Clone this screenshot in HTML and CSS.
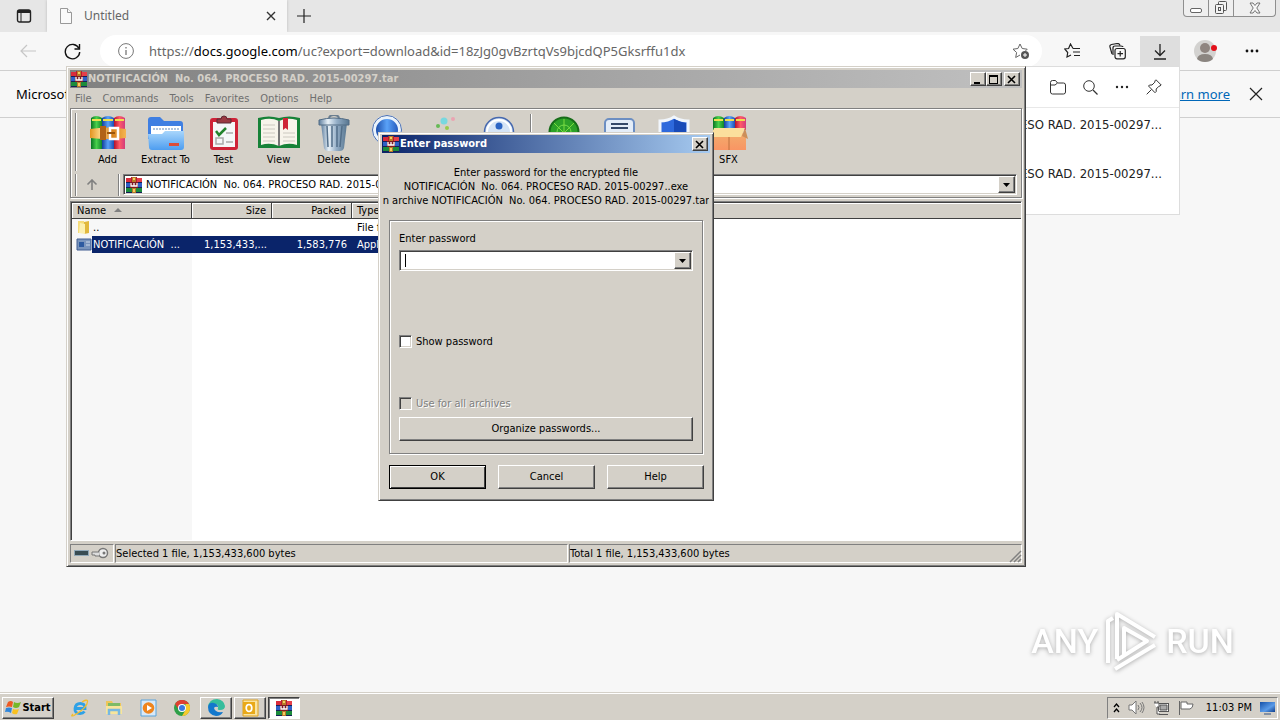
FILE: index.html
```html
<!DOCTYPE html>
<html lang="en">
<head>
<meta charset="utf-8">
<title>Untitled</title>
<link rel="stylesheet" href="styles.css">
</head>
<body>
<svg class="defs" aria-hidden="true">
  <defs>
    <linearGradient id="gr" x2="1"><stop offset="0" stop-color="#087522"/><stop offset=".5" stop-color="#49d04c"/><stop offset="1" stop-color="#11852a"/></linearGradient>
    <linearGradient id="bl" x2="1"><stop offset="0" stop-color="#123f9c"/><stop offset=".5" stop-color="#5aa2f8"/><stop offset="1" stop-color="#1c4fb4"/></linearGradient>
    <linearGradient id="rd" x2="1"><stop offset="0" stop-color="#b3122c"/><stop offset=".5" stop-color="#ff5a68"/><stop offset="1" stop-color="#d23c7c"/></linearGradient>
    <linearGradient id="go" x2="1"><stop offset="0" stop-color="#e39421"/><stop offset=".3" stop-color="#ffd98a"/><stop offset=".6" stop-color="#d77f18"/><stop offset="1" stop-color="#f5b552"/></linearGradient>
    <linearGradient id="fo" x2="0" y2="1"><stop offset="0" stop-color="#a9d6fb"/><stop offset="1" stop-color="#4d9df0"/></linearGradient>
    <linearGradient id="me" x2="1"><stop offset="0" stop-color="#5f7f9f"/><stop offset=".3" stop-color="#e8f1f8"/><stop offset=".6" stop-color="#93adc6"/><stop offset="1" stop-color="#57758f"/></linearGradient>
    <linearGradient id="bx" x2="0" y2="1"><stop offset="0" stop-color="#f2ac6c"/><stop offset="1" stop-color="#f99564"/></linearGradient>
    <linearGradient id="sc" x2="1" y2="1"><stop offset="0" stop-color="#1450a8"/><stop offset=".6" stop-color="#5a9be8"/><stop offset="1" stop-color="#0d3d8c"/></linearGradient>
    <symbol id="rar" viewBox="0 0 16 16">
      <path d="M0 1h5v4H0z" fill="#d92c3c"/><path d="M5 0h6v5H5z" fill="#b51c30"/><path d="M11 1h5v4h-5z" fill="#e5404a"/>
      <path d="M0 6h16v4H0z" fill="#2f5fc6"/><path d="M0 11h16v4H0z" fill="#1c8c3c"/>
      <path d="M0 5h16v1H0zM0 10h16v1H0zM0 15h16v1H0z" fill="#162058"/>
      <path d="M6 0h4v16H6z" fill="#b77a28"/><path d="M4 5h8v6H4z" fill="#7e1a22"/>
      <path d="M5 6v3h6V6M8 6v3" stroke="#fff" stroke-width="1.3" fill="none"/>
      <path d="M7 12h2v3H7zM7 1h2v2H7z" fill="#f4ce60"/>
    </symbol>
  </defs>
</svg>

<div class="desktop">
  <main class="browser">
    <div class="tabs">
      <button class="ghost tab-menu" aria-label="Tab actions"><svg width="16" height="16" viewBox="0 0 16 16" fill="none" stroke="#222"><rect x="1.5" y="2" width="13" height="12" rx="2" stroke-width="1.4"/><path d="M2 3.5h12" stroke-width="3"/><path d="M5 5v9"/></svg></button>
      <div class="tab">
        <svg width="12" height="16" viewBox="0 0 12 16" fill="#fafafa" stroke="#999"><path d="M.5 .5h7l4 4v11H.5z"/><path d="M7.500 .5v4h4"/></svg>
        <span class="tab-name">Untitled</span>
        <button class="ghost" aria-label="Close tab"><svg width="10" height="10" viewBox="0 0 10 10" stroke="#333" stroke-width="1.4"><path d="M1 1l8 8M9 1l-8 8"/></svg></button>
      </div>
      <button class="ghost new-tab" aria-label="New tab"><svg width="16" height="16" viewBox="0 0 16 16" stroke="#222" stroke-width="1.2"><path d="M8 1v14M1 8h14"/></svg></button>
      <div class="captions">
        <button aria-label="Minimize"><svg width="14" height="12" viewBox="0 0 14 12"><rect x="1.500" y="6.500" width="11" height="4" rx="1.500" fill="#fff" stroke="#666"/></svg></button>
        <button aria-label="Restore"><svg width="14" height="14" viewBox="0 0 14 14" fill="#f3f3f3" stroke="#555"><rect x="4.500" y=".5" width="8" height="9" rx="1"/><rect x="1.500" y="3.500" width="8" height="9" rx="1"/><rect x="4.500" y="6.500" width="2" height="3"/></svg></button>
        <button class="wide" aria-label="Close"><svg width="12" height="12" viewBox="0 0 12 12" fill="#f8f8f8" stroke="#666" stroke-width=".9"><path d="M1 1h3l2 2.500L8 1h3L7.800 6 11 11H8L6 8.500 4 11H1l3.200-5z"/></svg></button>
      </div>
    </div>
    <div class="nav">
      <button class="ghost back" aria-label="Back"><svg width="16" height="14" viewBox="0 0 16 14" fill="none" stroke="#c6c6c6" stroke-width="1.2"><path d="M16 7H1M7 1L1 7l6 6"/></svg></button>
      <button class="ghost reload" aria-label="Refresh"><svg width="17" height="17" viewBox="0 0 17 17" fill="none" stroke="#111" stroke-width="1.4"><path d="M15 5.500A7.200 7.200 0 1 0 15.700 9"/><path d="M15.500 1v5h-5"/></svg></button>
      <div class="address">
        <svg width="16" height="16" viewBox="0 0 16 16" fill="none" stroke="#777"><circle cx="8" cy="8" r="7.400"/><path d="M8 7v5M8 4v1.500" stroke-width="1.300"/></svg>
        <span class="url">https://<b>docs.google.com</b>/uc?export=download&amp;id=18zJg0gvBzrtqVs9bjcdQP5Gksrffu1dx</span>
        <button class="ghost" aria-label="Add to favorites"><svg width="18" height="17" viewBox="0 0 18 17" fill="none" stroke="#666"><path d="M8 12l-4.300 2.500.9-5L1 6.200l4.900-.7L8 1l2.200 4.500 5 .7-2 2"/><circle cx="13" cy="12" r="4" fill="#555" stroke="none"/><path d="M13 10v4M11 12h4" stroke="#fff"/></svg></button>
      </div>
      <div class="nav-tools">
        <button class="ghost" aria-label="Favorites"><svg width="17" height="16" viewBox="0 0 17 16" fill="none" stroke="#222" stroke-width="1.200"><path d="M9 5.500L6.500 1 4.600 5.500.7 6l3 3.500L3 14l4-2M9 5.500h7M9 9h7M10 12.500h6"/></svg></button>
        <button class="ghost collect" aria-label="Collections"><svg width="17" height="17" viewBox="0 0 17 17" fill="none" stroke="#222" stroke-width="1.200"><path d="M3 11L1 4Q.5 2 2.500 1.500l6-1Q10.500.5 11 2.500"/><path d="M4 12V5q0-2 2-2h6q2 0 2 1"/><rect x="6" y="5.500" width="10.300" height="10.300" rx="2" fill="#f7f7f7"/><path d="M11.200 8v5.500M8.500 10.700H14"/></svg></button>
        <button class="ghost active" aria-label="Downloads"><svg width="14" height="17" viewBox="0 0 14 17" fill="none" stroke="#222" stroke-width="1.300"><path d="M7 1v11M2 7.500L7 12.500l5-5M1 16h12"/></svg></button>
        <button class="ghost profile" aria-label="Profile"><svg width="24" height="22" viewBox="0 0 24 22"><circle cx="11" cy="11" r="11" fill="#d3d2d0"/><circle cx="11" cy="8" r="5" fill="#8f8580"/><path d="M3 19q1-5 8-5t8 5q-3 3-8 3t-8-3" fill="#8b8580"/><circle cx="20" cy="8" r="3" fill="#e3101b"/></svg></button>
        <button class="ghost more" aria-label="Settings"><svg width="14" height="4" viewBox="0 0 14 4" fill="#111"><circle cx="2" cy="2" r="1.400"/><circle cx="7" cy="2" r="1.400"/><circle cx="12" cy="2" r="1.400"/></svg></button>
      </div>
    </div>
    <div class="notice">
      <span>Microsoft</span>
      <a href="#">Learn more</a>
      <button class="ghost" aria-label="Dismiss"><svg width="14" height="14" viewBox="0 0 14 14" stroke="#222" stroke-width="1.200"><path d="M1 1l12 12M13 1L1 13"/></svg></button>
    </div>
  </main>

  <section class="downloads" aria-label="Downloads">
    <div class="dl-head">
      <button class="ghost" aria-label="Open folder"><svg width="16" height="15" viewBox="0 0 16 15" fill="none" stroke="#333"><path d="M.5 12V2.500q0-2 2-2h3l2 2.500h6q2 0 2 2v7q0 2-2 2h-11q-2 0-2-2M.5 5h4.500l2.500-2"/></svg></button>
      <button class="ghost" aria-label="Search"><svg width="15" height="15" viewBox="0 0 15 15" fill="none" stroke="#333"><circle cx="6" cy="6" r="5.300"/><path d="M10 10l4.500 4.500" stroke-width="1.300"/></svg></button>
      <button class="ghost" aria-label="More"><svg width="14" height="4" viewBox="0 0 14 4" fill="#222"><circle cx="2" cy="2" r="1.200"/><circle cx="7" cy="2" r="1.200"/><circle cx="12" cy="2" r="1.200"/></svg></button>
      <button class="ghost" aria-label="Pin"><svg width="16" height="16" viewBox="0 0 16 16" fill="none" stroke="#333"><path d="M10 .8l5.200 5.200-1.200 1-1 .2-2.800 2.800v2.500L9 13.700 2.500 7l1-1H6l2.800-2.800.2-1.400zM5.500 10.500L.7 15.300"/></svg></button>
    </div>
    <p class="dl-item">PROCESO RAD. 2015-00297...</p>
    <p class="dl-item">PROCESO RAD. 2015-00297...</p>
  </section>

  <div class="watermark" aria-label="ANY RUN">
    <span>ANY</span>
    <svg width="58" height="64" viewBox="0 0 58 64" fill="none" stroke="#fff" stroke-width="4" stroke-linejoin="round"><path d="M5 54V12l5-3M14 50V5l38 23M12 60l40-24M21 47V19l23 13-30 19"/></svg>
    <span>RUN</span>
  </div>

  <section class="window archive" aria-label="Archive">
    <header class="title inactive">
      <svg width="17" height="16"><use href="#rar" width="16" height="16"/></svg>
      <h1>NOTIFICACIÓN  No. 064. PROCESO RAD. 2015-00297.tar</h1>
      <button class="cap" aria-label="Minimize"><svg width="10" height="9" viewBox="0 0 10 9"><path d="M1 7h6v2H1z"/></svg></button>
      <button class="cap" aria-label="Maximize"><svg width="10" height="9" viewBox="0 0 10 9"><path d="M0 0h9v9H0zM1 2v6h7V2z" fill-rule="evenodd"/></svg></button>
      <button class="cap apart" aria-label="Close"><svg width="10" height="9" viewBox="0 0 10 9" stroke="#000" stroke-width="1.600"><path d="M1 1l7 7M8 1L1 8"/></svg></button>
    </header>
    <nav class="menu">
      <button>File</button><button>Commands</button><button>Tools</button><button>Favorites</button><button>Options</button><button>Help</button>
    </nav>
    <div class="bars">
      <div class="tools">
        <button class="tool"><svg width="36" height="36" viewBox="0 0 36 36"><path d="M1 3q5-4 11 0v31H1z" fill="url(#gr)"/><path d="M12 3q6-4 12 0v31H12z" fill="url(#bl)"/><path d="M24 3q5-4 11 0v31H24z" fill="url(#rd)"/><path d="M2 5h9M13 5h10M25 5h9" stroke="#efe04e" stroke-width="2"/><path d="M0 14q18-3 36 0v9q-18 2-36 0z" fill="url(#go)"/><path d="M10 11h6v14h-6z" fill="#b16317"/><path d="M20 13h8v11h-8z" fill="none" stroke="#fff" stroke-width="2.500"/><path d="M17 18h8" stroke="#9a560e" stroke-width="2"/></svg>Add</button>
        <button class="tool big"><svg width="38" height="36" viewBox="0 0 38 36"><path d="M1 5q0-3 3-3h9l4 4h16q3 0 3 3v15H1z" fill="#3f7fe2"/><path d="M4 11h30v12H4z" fill="#fff"/><path d="M6 14h27" stroke="#aec4df" stroke-dasharray="2 1" stroke-width="2"/><path d="M1 19h14l3-3h19v16q0 3-3 3H5q-3 0-3-3z" fill="url(#fo)"/><path d="M22 28h10v3H22z" fill="#dc4c38"/></svg>Extract To</button>
        <button class="tool"><svg width="32" height="36" viewBox="0 0 32 36"><rect x="2" y="3" width="28" height="32" rx="3" fill="#cf2338"/><path d="M5 7h22v25H5z" fill="#f5f7f8"/><path d="M9 8V4h4q0-3 3-3t3 3h4v4z" fill="#9a3941" stroke="#5d2b34"/><path d="M8 16l3 4 7-7" fill="none" stroke="#23832d" stroke-width="2.500"/><path d="M18 18h7M8 23h7v6H8zM18 27h7" stroke="#aaa" stroke-width="1.500" fill="none"/></svg>Test</button>
        <button class="tool"><svg width="42" height="36" viewBox="0 0 42 36"><path d="M0 3q11-3 21 0 10-3 21 0v30H0z" fill="#168238"/><path d="M3 5q10-3 18 1v25q-9-4-18-1zM39 5q-10-3-18 1v25q9-4 18-1z" fill="#f7f4eb"/><path d="M21 6v25" stroke="#777" stroke-width="2"/><path d="M5 10h12M5 14h12M5 18h12M5 22h12M5 26h12M25 18h12M25 22h12M25 26h12" stroke="#ccc9c0"/><path d="M25 3h5v12l-2.500-2-2.500 2z" fill="#ce2436"/></svg>View</button>
        <button class="tool"><svg width="32" height="36" viewBox="0 0 32 36"><path d="M11 4q0-4 5-4t5 4" fill="none" stroke="#6b7e90" stroke-width="2"/><path d="M3 8h26l-3 25q-1 3-4 3H10q-3 0-4-3z" fill="url(#me)"/><path d="M9 11l1 21M14 11v21M19 11v21M24 11l-2 21" stroke="#526e89" stroke-width="1.500"/><path d="M1 5q15-4 30 0v5H1z" fill="url(#me)" stroke="#536c85"/></svg>Delete</button>
        <button class="tool" aria-label="Find"><svg width="34" height="36" viewBox="0 0 34 36"><circle cx="15" cy="15" r="13" fill="url(#bl)" stroke="#eaf3fc" stroke-width="4"/><circle cx="15" cy="15" r="14.500" fill="none" stroke="#496cad"/></svg></button>
        <button class="tool" aria-label="Wizard"><svg width="36" height="36" viewBox="0 0 36 36"><circle cx="18" cy="6" r="3.500" fill="#78d8df"/><circle cx="27" cy="4" r="2" fill="#eaa4b2"/><circle cx="12" cy="11" r="2" fill="#65ba55"/><circle cx="21" cy="13" r="2" fill="#9acb49"/></svg></button>
        <button class="tool" aria-label="Info"><svg width="34" height="36" viewBox="0 0 34 36"><circle cx="17" cy="17" r="14.500" fill="#d5e4f6" stroke="#4668ae" stroke-width="1.500"/><circle cx="17" cy="17" r="12" fill="none" stroke="#fff" stroke-width="2"/><circle cx="17" cy="11" r="3.500" fill="#2c65c4"/></svg></button>
        <span class="rule"></span>
        <button class="tool" aria-label="Virus scan"><svg width="34" height="36" viewBox="0 0 34 36"><circle cx="17" cy="17" r="14.500" fill="#2ca128" stroke="#176d19" stroke-width="2"/><path d="M17 4v26M7 8l20 20M27 8L7 28" stroke="#7cdc3e"/><circle cx="17" cy="17" r="7" fill="none" stroke="#77dd48"/></svg></button>
        <button class="tool" aria-label="Comment"><svg width="34" height="36" viewBox="0 0 34 36"><rect x="3" y="4" width="29" height="25" rx="4" fill="#e4edf8" stroke="#6c8ec2" stroke-width="2"/><path d="M9 9h17M9 13h17" stroke="#354969" stroke-width="2"/></svg></button>
        <button class="tool" aria-label="Protect"><svg width="34" height="36" viewBox="0 0 34 36"><path d="M3 6q8 0 14-4 6 4 14 4v14q-3 9-14 14Q6 29 3 20z" fill="#2e69dc" stroke="#f1f6fc" stroke-width="3"/><path d="M17 4q6 3 12 4v10H17z" fill="#194bb8"/></svg></button>
        <button class="tool"><svg width="38" height="36" viewBox="0 0 38 36"><path d="M3 3q5-4 11 0v12H3z" fill="url(#gr)"/><path d="M14 3q5-4 11 0v12H14z" fill="url(#bl)"/><path d="M25 3q5-4 11 0v12H25z" fill="url(#rd)"/><path d="M4 5h9M15 5h9M26 5h9" stroke="#efe04e" stroke-width="2"/><path d="M3 18h33v17H3z" fill="url(#bx)"/><path d="M4 13h31l-4 9H1z" fill="#fbdf9d"/><path d="M35 13l3 11-6-3z" fill="#cc8f5a"/><path d="M19 22v13" stroke="#bd713e"/></svg>SFX</button>
      </div>
      <div class="path">
        <button class="up" aria-label="Up"><svg width="12" height="11" viewBox="0 0 12 11" fill="none" stroke="#808080" stroke-width="1.600"><path d="M6 11V1M1.500 5.500L6 1l4.500 4.500"/></svg></button>
        <div class="combo">
          <svg width="16" height="16"><use href="#rar"/></svg>
          <input aria-label="Path" value="NOTIFICACIÓN  No. 064. PROCESO RAD. 2015-00297.tar">
          <button class="drop" aria-label="Open list"><svg width="7" height="4"><path d="M0 0h7L3.500 4z"/></svg></button>
        </div>
      </div>
    </div>
    <div class="list">
      <table>
        <colgroup><col class="c-name"><col class="c-num"><col class="c-num"><col class="c-type"><col></colgroup>
        <thead><tr><th>Name <svg class="sort" width="8" height="4"><path d="M0 4l4-4 4 4z" fill="#808080"/></svg></th><th class="num">Size</th><th class="num">Packed</th><th>Type</th><th></th></tr></thead>
        <tbody>
          <tr><td class="file"><svg width="16" height="15" viewBox="0 0 16 15"><path d="M2 1h6v12H2z" fill="#f5dc7a"/><path d="M8 2l5-1v12l-5 1z" fill="#e1b83d"/><path d="M4 3l5 1v10l-6-1z" fill="#fcf0b0"/></svg><span>..</span></td><td></td><td></td><td>File folder</td><td></td></tr>
          <tr class="selected"><td class="file"><svg width="16" height="14" viewBox="0 0 16 14"><path d="M1 1h14v11H1z" fill="#7995bd" stroke="#405d91"/><path d="M3 4h5v5H3z" fill="#2c5aa0"/><path d="M10 4h4M10 7h4" stroke="#cbd8eb"/></svg><span>NOTIFICACIÓN  ...</span></td><td class="num">1,153,433,...</td><td class="num">1,583,776</td><td>Application</td><td></td></tr>
        </tbody>
      </table>
    </div>
    <footer class="status">
      <div class="marks"><svg width="36" height="12" viewBox="0 0 36 12"><rect x=".5" y="3.500" width="14" height="5" fill="#394c53" stroke="#91a8b8"/><circle cx="29" cy="6" r="4.500" fill="#eee" stroke="#777" stroke-width="1.500"/><circle cx="30" cy="6" r="1.500" fill="#777"/><path d="M25 5h-7v3h3v1h4" fill="#ddd" stroke="#777"/></svg></div>
      <div>Selected 1 file, 1,153,433,600 bytes</div>
      <div>Total 1 file, 1,153,433,600 bytes</div>
      <svg class="grip" width="13" height="13" viewBox="0 0 13 13" stroke="#808080" stroke-width="1.500"><path d="M12 1L1 12M12 5l-7 7M12 9l-3 3"/></svg>
    </footer>
  </section>

  <form class="window dialog" aria-label="Enter password" onsubmit="return false">
    <header class="title">
      <svg width="17" height="16"><use href="#rar" width="16" height="16"/></svg>
      <h2>Enter password</h2>
      <button type="button" class="cap apart" aria-label="Close"><svg width="10" height="9" viewBox="0 0 10 9" stroke="#000" stroke-width="1.600"><path d="M1 1l7 7M8 1L1 8"/></svg></button>
    </header>
    <div class="message"><p>Enter password for the encrypted file</p><p>NOTIFICACIÓN  No. 064. PROCESO RAD. 2015-00297..exe</p><p>n archive NOTIFICACIÓN  No. 064. PROCESO RAD. 2015-00297.tar</p></div>
    <div class="group">
      <label for="pw">Enter password</label>
      <div class="combo pw">
        <input id="pw" type="text"><span class="caret"></span>
        <button type="button" class="drop" aria-label="Open list"><svg width="7" height="4"><path d="M0 0h7L3.500 4z"/></svg></button>
      </div>
      <label class="check"><input type="checkbox">Show password</label>
      <label class="check off"><input type="checkbox" disabled>Use for all archives</label>
      <button type="button" class="push">Organize passwords...</button>
    </div>
    <div class="actions">
      <button class="push main">OK</button><button type="button" class="push">Cancel</button><button type="button" class="push">Help</button>
    </div>
  </form>

  <footer class="taskbar">
    <button class="task start"><svg width="17" height="16" viewBox="0 0 17 16"><path d="M3 2q3-2 5 0L7 7Q4 6 1 7z" fill="#ee5a24"/><path d="M9 2q3 2 7 0l-2 5q-3 2-6 0z" fill="#76b82a"/><path d="M1 8q3-1 6 0l-1 5q-3-2-6-1z" fill="#2f86dc"/><path d="M8 9q3 1 6 0l-2 5q-3 1-5-1z" fill="#f9c120"/></svg>Start</button>
    <button class="task flat ie" aria-label="Internet Explorer"><svg width="18" height="18" viewBox="0 0 18 18" fill="none"><path d="M4 9.500h10Q14 4.500 9.300 4.500T4 9.500t5 5q3 0 4.500-2" stroke="#2ea1e6" stroke-width="2.800"/><path d="M2 15Q-1 18 3 16.500 17 8 16.500 2 16 0 11 3" stroke="#f2bd2c" stroke-width="1.300"/></svg></button>
    <button class="task flat" aria-label="Explorer"><svg width="18" height="18" viewBox="0 0 18 18"><path d="M1 2h6l1 2h8v11H1z" fill="#eec659"/><path d="M3 4h12v4H3z" fill="#7dbb67"/><path d="M1 7h16v8H1z" fill="#f8e59b"/><path d="M4 16v-5h10v5" fill="none" stroke="#77b8e2" stroke-width="2.500"/></svg></button>
    <button class="task flat" aria-label="Media player"><svg width="17" height="18" viewBox="0 0 17 18"><path d="M1 1h15v16H1z" fill="#d8e9f8" stroke="#58a3dc"/><circle cx="8.500" cy="9" r="5.800" fill="#ef851e"/><path d="M7 6l5 3-5 3z" fill="#fff"/></svg></button>
    <button class="task flat" aria-label="Chrome"><svg width="16" height="16" viewBox="0 0 16 16"><circle cx="8" cy="8" r="8" fill="#2e9f48"/><path d="M1 4A8 8 0 0 1 15 4H8l-3 6z" fill="#df4031"/><path d="M15 4A8 8 0 0 1 8 16l3.500-6V4z" fill="#f7c92c"/><circle cx="8" cy="8" r="4" fill="#fff"/><circle cx="8" cy="8" r="3" fill="#3b79e1"/></svg></button>
    <button class="task" aria-label="Edge"><svg width="17" height="17" viewBox="0 0 17 17"><path d="M0 8Q1 0 9 0q7 1 8 7 0 4-5 4-3 0-2-2 1-4-3-4Q3 5 0 8" fill="#35bd9c"/><path d="M0 8Q1 3 6 4q4 1 4 4-3-1-4 1 1 5 9 4-2 4-7 4Q0 16 0 8" fill="#1378cc"/></svg></button>
    <button class="task" aria-label="Outlook"><svg width="17" height="18" viewBox="0 0 17 18"><path d="M1 1h15v16H1z" fill="#fae4a0" stroke="#e0a21c"/><path d="M1 3h12v12H1z" fill="#e9a918"/><ellipse cx="7" cy="9" rx="2.800" ry="3.500" fill="none" stroke="#fff" stroke-width="1.700"/></svg></button>
    <button class="task pressed" aria-label="WinRAR"><svg width="16" height="16"><use href="#rar"/></svg></button>
    <div class="tray">
      <svg width="7" height="12" viewBox="0 0 7 12" fill="none" stroke="#000" stroke-width="1.300"><path d="M1 5l2.500-3L6 5M1 10l2.500-3L6 10"/></svg>
      <svg width="17" height="15" viewBox="0 0 17 15" fill="#fff" stroke="#777"><path d="M1 5h3l4-4v13l-4-4H1z"/><path d="M10 5q2 2.500 0 5M12 3q4 4.500 0 9M14 2q4 5.500 0 11" fill="none"/></svg>
      <svg width="17" height="16" viewBox="0 0 17 16" fill="#fff" stroke="#555"><rect x="5.500" y="3.500" width="10" height="8"/><path d="M7 5h7v5H7z" fill="#aaa"/><path d="M6 14.500h9M1 3h5v4H4v7h3M2 1v2M5 1v2"/></svg>
      <svg width="16" height="15" viewBox="0 0 16 15" fill="#fff" stroke="#666"><path d="M1.500 1v14M3 2h6v2h6q0 4-3 5H3z"/></svg>
      <time>11:03 PM</time>
      <svg width="15" height="14" viewBox="0 0 15 14"><path d="M0 1h15v10H0z" fill="url(#sc)"/><path d="M4 12h7v2H4z" fill="#8290a4"/></svg>
    </div>
  </footer>
</div>
</body>
</html>
```
FILE: styles.css
```css
* { box-sizing: border-box; }
body { margin: 0; }
h1, h2, p { margin: 0; font: inherit; }
button, input { font: inherit; color: inherit; padding: 0; border: 0; background: none; border-radius: 0; outline: 0; }
svg { display: block; flex: none; }
.defs { position: absolute; width: 0; height: 0; }

.desktop {
  position: relative;
  display: flex;
  flex-direction: column;
  min-height: 100vh;
  overflow: hidden;
  background: #f7f7f7;
  color: #000;
  font: 11px/14px "DejaVu Sans Condensed", "DejaVu Sans", sans-serif;
}

/* Browser */
.browser { flex: 1; font-family: "Noto Sans", "Open Sans", sans-serif; }
.ghost { display: grid; place-items: center; }
.tabs { display: flex; align-items: stretch; height: 32px; background: #e6e6e6; }
.tab-menu { width: 47px; }
.tab {
  flex: 0 1 240px;
  display: flex;
  align-items: center;
  gap: 12px;
  padding: 0 11px 0 13px;
  background: #f7f7f7;
  box-shadow: 0 0 3px #bbb;
  clip-path: inset(0 -3px);
  font-size: 12px;
  color: #666;
}
.tab-name { flex: 1; }
.new-tab { width: 34px; }
.captions { display: flex; height: 17px; margin: 0 4px 0 auto; border: 1px solid #8f8f8f; border-top: 0; border-radius: 0 0 4px 4px; background: #efefef; }
.captions button { display: grid; place-items: center; width: 25px; border-right: 1px solid #8f8f8f; }
.captions .wide { width: 41px; border: 0; }
.nav { display: flex; align-items: center; height: 39px; border-bottom: 1px solid #cfcfcf; background: #f7f7f7; }
.back { width: 56px; }
.reload { width: 32px; }
.address { flex: 1; display: flex; align-items: center; gap: 15px; height: 32px; margin-left: 12px; padding: 0 12px 0 18px; border-radius: 16px; background: #fff; }
.url { flex: 1; font-size: 13px; line-height: 20px; color: #666; white-space: nowrap; }
.url b { font-weight: 400; color: #000; }
.nav-tools { display: flex; align-self: stretch; align-items: center; padding: 4px 8px 0; }
.nav-tools .ghost { width: 44px; height: 34px; padding-bottom: 4px; }
.nav-tools .collect { width: 46px; }
.nav-tools .active { width: 40px; background: #dedede; }
.nav-tools .profile { width: 52px; }
.nav-tools .more { width: 40px; }
.notice { display: flex; align-items: center; height: 47px; padding: 0 17px 0 16px; border-bottom: 1px solid #cfcfcf; font-size: 13px; line-height: 18px; }
.notice a { margin: 0 19px 0 auto; color: #0067b8; }

.downloads { position: absolute; top: 66px; right: 100px; width: 360px; height: 149px; border: 1px solid #ddd; background: #fff; }
.dl-head { display: flex; justify-content: flex-end; align-items: center; gap: 17px; height: 41px; padding-right: 17px; border-bottom: 1px solid #e8e8e8; }
.dl-item { padding: 8px 17px 23px 0; font-size: 13px; line-height: 18px; text-align: right; color: #222; }

.watermark {
  position: absolute;
  right: 46px;
  bottom: 47px;
  display: flex;
  align-items: center;
  gap: 5px;
  font: 500 34px/44px Roboto, sans-serif;
  color: #fff;
  filter: drop-shadow(0 1px 2px #aaa);
}

/* Windows */
.window {
  position: absolute;
  border: 1px solid;
  border-color: #d4d0c8 #404040 #404040 #d4d0c8;
  background: #d4d0c8;
  box-shadow: inset 1px 1px #fff, inset -1px -1px #808080;
}
.archive { top: 66px; left: 66px; width: 75%; height: 501px; display: flex; flex-direction: column; padding: 3px; }
.dialog { top: 132px; left: 378px; width: 336px; padding: 2px 3px 11px; }
.title {
  display: flex;
  align-items: center;
  height: 18px;
  padding: 0 2px 0 1px;
  background: linear-gradient(90deg, #0a246a, #a6caf0);
  color: #fff;
  font-weight: 700;
  white-space: pre;
}
.title h1, .title h2 { flex: 1; }
.inactive { background: linear-gradient(90deg, #808080, #c0c0c0); color: #d4d0c8; }
.cap, .drop, .push, .task {
  display: flex;
  align-items: center;
  justify-content: center;
  background: #d4d0c8;
  border: 1px solid;
  border-color: #fff #404040 #404040 #fff;
  box-shadow: inset -1px -1px #808080;
}
.cap { width: 16px; height: 14px; }
.cap.apart { margin-left: 2px; }
.menu { display: flex; gap: 11px; padding: 4px 5px 2px; height: 20px; color: #6f6f6f; }
.bars { height: 90px; border: 1px solid #808080; box-shadow: inset 1px 1px #fff, 1px 1px #fff; padding: 4px 4px 0; }
.tools { display: flex; height: 58px; padding-left: 4px; border-left: 1px solid #808080; box-shadow: inset 1px 0 #fff; }
.tool { display: flex; flex-direction: column; align-items: center; gap: 2px; width: 55px; padding-top: 2px; white-space: nowrap; }
.tool.big { width: 61px; }
.rule { width: 2px; height: 50px; margin: 1px 4px 0; border-left: 1px solid #808080; border-right: 1px solid #fff; }
.path { display: flex; align-items: center; height: 25px; margin-top: 1px; }
.up { display: grid; place-items: center; width: 44px; height: 22px; padding-right: 10px; border: solid #808080; border-width: 0 1px; box-shadow: inset 1px 0 #fff, 1px 0 #fff; }
.combo {
  flex: 1;
  display: flex;
  align-items: center;
  height: 21px;
  margin-left: 4px;
  padding: 1px;
  border: 1px solid;
  border-color: #808080 #fff #fff #808080;
  background: #fff;
  box-shadow: inset 1px 1px #404040, inset -1px -1px #d4d0c8;
}
.combo > svg { margin: 0 4px 0 1px; }
.combo input { flex: 1; min-width: 0; }
.drop { width: 17px; height: 17px; }
.list {
  flex: 1;
  margin-top: 3px;
  border: 1px solid;
  border-color: #808080 #fff #fff #808080;
  box-shadow: inset 1px 1px #404040;
  padding: 1px 0 0 1px;
  background: linear-gradient(90deg, #f7f7f7 121px, #fff 121px);
}
table { width: 100%; table-layout: fixed; border-collapse: separate; border-spacing: 0; white-space: pre; }
.c-name { width: 120px; }
.c-num { width: 80px; }
.c-type { width: 100px; }
th { height: 16px; padding: 0 5px; text-align: left; font-weight: 400; background: #d4d0c8; border: solid #404040; border-width: 0 1px 1px 0; box-shadow: inset 1px 1px #fff; line-height: 15px; }
th:last-child { border-right: 0; }
.sort { display: inline-block; margin-left: 5px; vertical-align: 2px; }
td { height: 17px; padding: 0 5px; overflow: hidden; }
.num { text-align: right; }
.file { display: flex; align-items: center; padding: 0 0 0 4px; }
.file span { flex: 1; padding-left: 1px; line-height: 17px; }
.selected td { background: #0a246a; color: #fff; }
.selected .file, .selected td:last-child { background: none; }
.selected .file span { background: #0a246a; }
.status { position: relative; display: flex; gap: 1px; height: 19px; margin-top: 3px; }
.status div { flex: 1; padding: 1px 0; border: 1px solid; border-color: #808080 #fff #fff #808080; line-height: 15px; }
.status .marks { flex: 0 0 42px; padding: 2px 3px; }
.grip { position: absolute; right: 0; bottom: 0; }

/* Password dialog */
.message { margin: 13px 1px 12px; overflow: hidden; text-align: center; white-space: pre; line-height: 14px; }
.message p { display: flex; justify-content: center; }
.group { display: flex; flex-direction: column; margin: 0 7px; padding: 11px 9px 12px; border: 1px solid #808080; box-shadow: inset 1px 1px #fff, 1px 1px #fff; }
.pw { position: relative; flex: none; margin: 4px 0 63px; }
.pw input { padding-left: 4px; }
.caret { position: absolute; left: 5px; top: 3px; width: 1px; height: 13px; background: #000; }
.check { display: flex; align-items: center; gap: 4px; height: 15px; }
.check input { appearance: none; width: 13px; height: 13px; margin: 0; border: 1px solid; border-color: #808080 #fff #fff #808080; box-shadow: inset 1px 1px #404040, inset -1px -1px #d4d0c8; background: #fff; }
.check.off { margin: 47px 0 6px; color: #808080; text-shadow: 1px 1px #fff; }
.check.off input { background: #d4d0c8; }
.push { height: 24px; }
.actions { display: flex; gap: 12px; margin: 11px 6px 0 7px; }
.actions .push { flex: 1; }
.push.main { border-color: #000; box-shadow: inset 1px 1px #fff, inset -1px -1px #404040; }

/* Taskbar */
.taskbar { display: flex; align-items: center; height: 28px; padding: 2px 2px 0; background: #d4d0c8; border-top: 1px solid #d4d0c8; box-shadow: inset 0 1px #fff; }
.task { width: 32px; height: 22px; margin-right: 2px; }
.task.flat { border-color: transparent; box-shadow: none; }
.task.start { width: 52px; font-weight: 700; }
.task.ie { margin-left: 8px; }
.task.pressed { background: #fff; border-color: #404040 #fff #fff #404040; box-shadow: inset 1px 1px #808080; }
.tray { display: flex; align-items: center; gap: 8px; height: 22px; margin-left: auto; padding: 0 2px 0 5px; border: 1px solid; border-color: #808080 #fff #fff #808080; }
.tray time { padding-left: 4px; }
```
